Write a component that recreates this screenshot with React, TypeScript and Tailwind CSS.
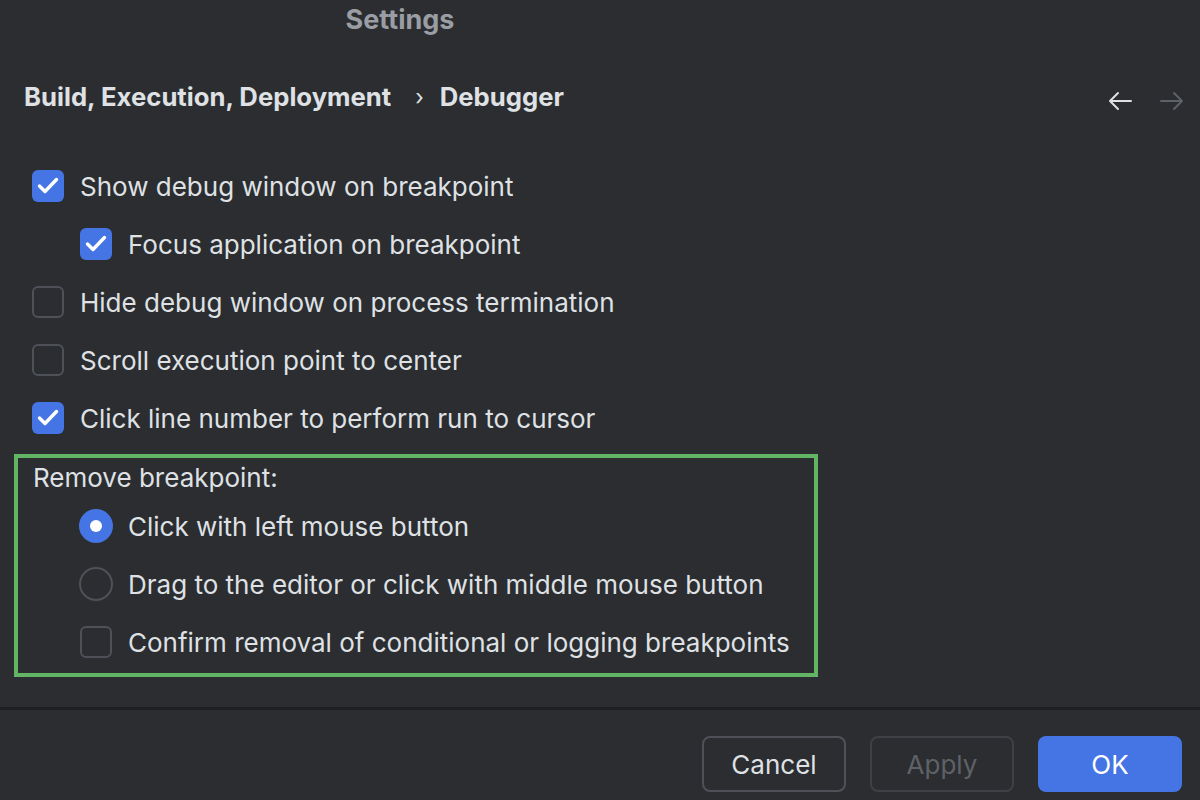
import React from "react";

const font = { fontFamily: "Inter, 'Noto Sans', sans-serif" };

function Check({ checked }: { checked: boolean }) {
  if (checked) {
    return (
      <div className="w-[32px] h-[32px] rounded-[6px] bg-[#4575e4] shrink-0">
        <svg width="32" height="32" viewBox="0 0 32 32" fill="none">
          <path d="M7.5 16 L13 21.5 L24.5 9.5" stroke="#ffffff" strokeWidth="3.4" strokeLinecap="round" strokeLinejoin="round" />
        </svg>
      </div>
    );
  }
  return <div className="w-[32px] h-[32px] rounded-[6px] border-2 border-[#4e5157] shrink-0" />;
}

function Radio({ checked }: { checked: boolean }) {
  if (checked) {
    return (
      <div className="w-[34px] h-[34px] rounded-full bg-[#4575e4] flex items-center justify-center shrink-0">
        <div className="w-[12px] h-[12px] rounded-full bg-white" />
      </div>
    );
  }
  return <div className="w-[34px] h-[34px] rounded-full border-2 border-[#4e5157] shrink-0" />;
}

function Row({ indent, control, label }: { indent: boolean; control: React.ReactNode; label: string }) {
  return (
    <div className={`h-[58px] flex items-center gap-[16px] ${indent ? "pl-[80px]" : "pl-[32px]"}`}>
      {control}
      <span className="text-[26px] text-[#dfe1e5] whitespace-nowrap">{label}</span>
    </div>
  );
}

export default function App() {
  return (
    <div className="w-[1200px] h-[800px] bg-[#2b2d30] flex flex-col overflow-hidden" style={font}>
      <div className="h-[40px] w-[800px] flex items-center justify-center">
        <span className="text-[27px] font-bold text-[#9a9da3]">Settings</span>
      </div>
      <div className="h-[54px] mt-[30px] flex items-center pl-[24px] pr-[16px]">
        <span className="text-[25.7px] font-bold text-[#dfe1e5]">Build, Execution, Deployment</span>
        <span className="text-[22px] text-[#dfe1e5] ml-[24px] mr-[16px]">›</span>
        <span className="text-[25.7px] font-bold text-[#dfe1e5]">Debugger</span>
        <div className="ml-auto flex items-center gap-[28px] pt-[8px]">
          <svg width="24" height="20" viewBox="0 0 24 20" fill="none">
            <path d="M23 10 H2 M10 2 L2 10 L10 18" stroke="#dfe1e5" strokeWidth="2" strokeLinecap="round" strokeLinejoin="round" />
          </svg>
          <svg width="24" height="20" viewBox="0 0 24 20" fill="none">
            <path d="M1 10 H22 M14 2 L22 10 L14 18" stroke="#5e6167" strokeWidth="2" strokeLinecap="round" strokeLinejoin="round" />
          </svg>
        </div>
      </div>
      <div className="mt-[33px] flex flex-col">
        <Row indent={false} control={<Check checked />} label="Show debug window on breakpoint" />
        <Row indent control={<Check checked />} label="Focus application on breakpoint" />
        <Row indent={false} control={<Check checked={false} />} label="Hide debug window on process termination" />
        <Row indent={false} control={<Check checked={false} />} label="Scroll execution point to center" />
        <Row indent={false} control={<Check checked />} label="Click line number to perform run to cursor" />
      </div>
      <div className="mt-[7px] ml-[14px] w-[804px] h-[223px] border-4 border-[#62b565] flex flex-col">
        <div className="h-[39px] flex items-center pl-[15px]">
          <span className="text-[26px] text-[#dfe1e5]">Remove breakpoint:</span>
        </div>
        <div className="-ml-[18px]">
          <div className="h-[58px] flex items-center gap-[15px] pl-[79px]">
            <Radio checked />
            <span className="text-[26px] text-[#dfe1e5] whitespace-nowrap">Click with left mouse button</span>
          </div>
          <div className="h-[58px] flex items-center gap-[15px] pl-[79px]">
            <Radio checked={false} />
            <span className="text-[26px] text-[#dfe1e5] whitespace-nowrap">Drag to the editor or click with middle mouse button</span>
          </div>
          <div className="h-[58px] flex items-center gap-[16px] pl-[80px]">
            <Check checked={false} />
            <span className="text-[26px] text-[#dfe1e5] whitespace-nowrap">Confirm removal of conditional or logging breakpoints</span>
          </div>
        </div>
      </div>
      <div className="mt-[30px] h-[3px] bg-[#1e1f22]" />
      <div className="mt-[26px] flex justify-end gap-[24px] pr-[18px]">
        <div className="w-[144px] h-[56px] rounded-[8px] border-2 border-[#4e5157] flex items-center justify-center text-[26px] text-[#dfe1e5]">Cancel</div>
        <div className="w-[144px] h-[56px] rounded-[8px] border-2 border-[#3e4045] flex items-center justify-center text-[26px] text-[#5e6167]">Apply</div>
        <div className="w-[144px] h-[56px] rounded-[8px] bg-[#4575e4] flex items-center justify-center text-[26px] text-white">OK</div>
      </div>
    </div>
  );
}
